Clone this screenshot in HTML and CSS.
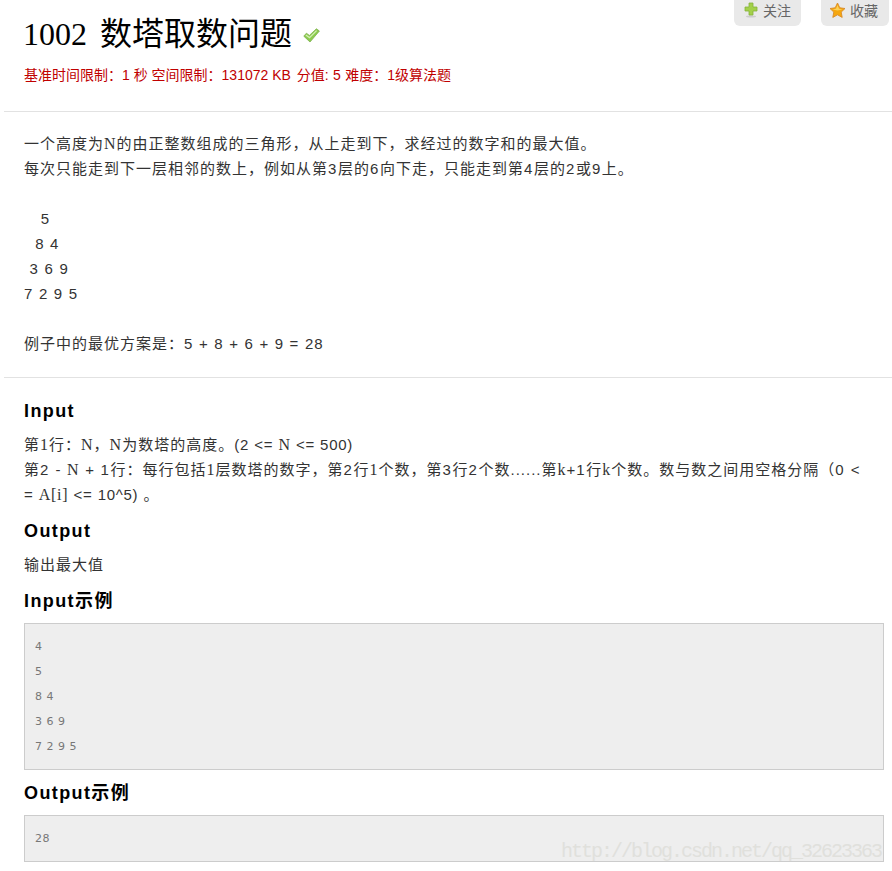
FILE: index.html
```html
<!DOCTYPE html>
<html lang="zh-CN">
<head>
<meta charset="utf-8">
<title>1002 数塔取数问题</title>
<link rel="stylesheet" href="styles.css">
</head>
<body>
<div class="page">
  <header class="head">
    <div class="head-main">
      <h1 class="title">1002 <span class="title-cn">数塔取数问题</span>
        <svg class="check" width="17" height="15" viewBox="0 0 17 15"><path d="M0.8 8.2 L3.4 5.2 L6.4 7.4 L13.4 0.8 L16.4 3 L7 14 Z" fill="#8ccb4e" stroke="#7fb04f" stroke-width="0.8" stroke-linejoin="round"/><path d="M2.8 7 L6.5 9.6 L13.6 2.6" fill="none" stroke="#d3f0b4" stroke-width="1.2"/></svg>
      </h1>
      <p class="meta">基准时间限制：1 秒 空间限制：131072 KB <span class="meta-gap">分值: 5 难度：1级算法题</span></p>
    </div>
    <div class="actions">
      <a class="btn btn-follow">
        <svg width="14" height="16" viewBox="0 0 14 16"><ellipse cx="7" cy="14.6" rx="5" ry="1" fill="#ccc"/><path d="M5 1 H9 V5 H13 V9 H9 V13 H5 V9 H1 V5 H5 Z" fill="#a3d04a" stroke="#86b23a" stroke-width="0.8" stroke-linejoin="round"/></svg>
        关注</a>
      <a class="btn btn-fav">
        <svg width="17" height="17" viewBox="0 0 17 17"><path d="M8.5 1 L10.8 5.8 L16 6.5 L12.2 10.1 L13.2 15.4 L8.5 12.8 L3.8 15.4 L4.8 10.1 L1 6.5 L6.2 5.8 Z" fill="#f5a70f" stroke="#d88a28" stroke-width="0.9" stroke-linejoin="round"/><path d="M8.5 3 L10 6.8 L13.5 7.4 L8.5 8.5 L3.5 7.4 L7 6.8 Z" fill="#fbd15a"/></svg>
        收藏</a>
    </div>
  </header>

  <section class="statement">
    <p>一个高度为<span class="sf">N</span>的由正整数组成的三角形，从上走到下，求经过的数字和的最大值。</p>
    <p>每次只能走到下一层相邻的数上，例如从第<span class="dg">3</span>层的<span class="dg">6</span>向下走，只能走到第<span class="dg">4</span>层的<span class="dg">2</span>或<span class="dg">9</span>上。</p>
    <p>&nbsp;</p>
    <p>&nbsp;&nbsp;&nbsp;5</p>
    <p>&nbsp;&nbsp;8 4</p>
    <p>&nbsp;3 6 9</p>
    <p>7 2 9 5</p>
    <p>&nbsp;</p>
    <p>例子中的最优方案是：5 + 8 + 6 + 9 = 28</p>
  </section>

  <section class="details">
    <h2 class="label">Input</h2>
    <p>第<span class="sf">1</span>行：<span class="sf">N</span>，<span class="sf">N</span>为数塔的高度。<span class="tight">(2 &lt;= <span class="sf">N</span> &lt;= 500)</span></p>
    <p>第<span class="dg">2</span> - <span class="sf">N</span> + <span class="dg">1</span>行：每行包括<span class="sf">1</span>层数塔的数字，第<span class="dg">2</span>行<span class="sf">1</span>个数，第<span class="dg">3</span>行<span class="dg">2</span>个数......第<span class="sf">k</span>+<span class="dg">1</span>行<span class="sf">k</span>个数。数与数之间用空格分隔（<span class="dg">0</span> &lt;<br><span class="tight">= <span class="sf">A[i]</span> &lt;= 10^5) 。</span></p>
    <h2 class="label">Output</h2>
    <p>输出最大值</p>
    <h2 class="label label-in">Input示例</h2>
    <div class="code">
      <div>4</div>
      <div>5</div>
      <div>8 4</div>
      <div>3 6 9</div>
      <div>7 2 9 5</div>
    </div>
    <h2 class="label label-out">Output示例</h2>
    <div class="code">
      <div>28</div>
    </div>
  </section>
</div>
<div class="watermark">http://blog.csdn.net/qq_32623363</div>
</body>
</html>
```
FILE: styles.css
```css
* { box-sizing: border-box; }
html, body { margin: 0; padding: 0; background: #fff; }
body {
  width: 892px;
  height: 871px;
  overflow: hidden;
  position: relative;
  font-family: "Liberation Sans", "Noto Sans CJK SC", sans-serif;
  color: #333;
}
.page { padding-left: 4px; }
.head {
  display: flex;
  justify-content: space-between;
  align-items: flex-start;
  height: 112px;
  border-bottom: 1px solid #e2e2e2;
}
.head-main { padding: 14px 0 0 19px; }
.title {
  margin: 0;
  font-family: "Liberation Serif", "Noto Sans CJK SC", serif;
  font-size: 32px;
  line-height: 40px;
  font-weight: 400;
  color: #000;
  display: flex;
  align-items: center;
  white-space: pre;
}
.title-cn { margin-left: 5px; }
.check { margin-left: 11px; margin-top: 3px; }
.meta {
  margin: 11px 0 0 1px;
  font-size: 14px;
  line-height: 20px;
  color: #c00000;
}
.meta-gap { margin-left: 2px; word-spacing: 0.5px; }
.actions { display: flex; gap: 20px; padding-right: 3px; }
.btn {
  display: flex;
  align-items: center;
  gap: 5px;
  width: 67px;
  height: 26px;
  padding: 0 0 6px 10px;
  background: #e9e9e9;
  border-radius: 0 0 6px 6px;
  font-size: 14px;
  color: #666;
}
.btn-fav { width: 68px; padding-left: 8px; gap: 4px; }
.statement {
  padding: 19px 20px 21px;
  border-bottom: 1px solid #e2e2e2;
  font-size: 15px;
  line-height: 25px;
  letter-spacing: 1px;
  word-spacing: 0.4px;
}
.statement p, .details p { margin: 0; }
.details {
  padding: 21px 8px 0 20px;
  font-size: 15px;
  line-height: 25px;
  letter-spacing: 1px;
  word-spacing: 0.4px;
}
.sf {
  font-family: "Liberation Serif", "Noto Sans CJK SC", serif;
  font-size: 16px;
  line-height: 1;
}
.dg { letter-spacing: 1.6px; }
.tight { letter-spacing: 0.7px; }
.label {
  margin: 12px 0 8px;
  font-size: 18px;
  line-height: 25px;
  font-weight: 700;
  color: #000;
  letter-spacing: 1.4px;
  word-spacing: 0;
}
.details .label:first-child { margin-top: 0; }
.label-in { margin-top: 12px; margin-bottom: 9px; }
.label-out { margin-top: 11px; margin-bottom: 9px; }
.code {
  padding: 10px;
  background: #eee;
  border: 1px solid #ccc;
  font-family: "DejaVu Sans", sans-serif;
  font-size: 11px;
  line-height: 25px;
  letter-spacing: 0.5px;
  word-spacing: 0;
  color: #777;
}
.watermark {
  position: absolute;
  left: 561px;
  top: 841px;
  font-family: "Liberation Mono", monospace;
  font-size: 20px;
  line-height: 22px;
  letter-spacing: -2px;
  color: #e0e0dc;
  white-space: nowrap;
}
```
